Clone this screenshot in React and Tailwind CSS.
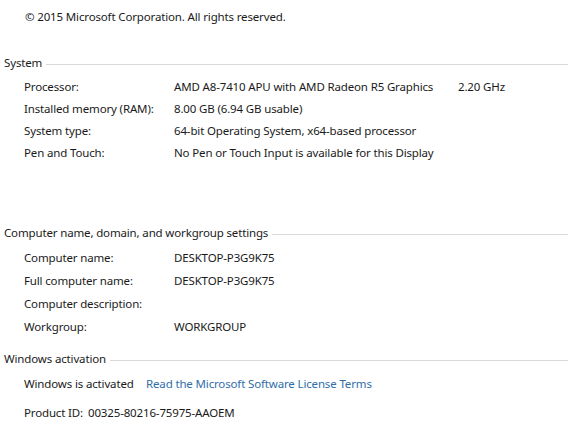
import React from "react";

const font = { fontFamily: '"Noto Sans", "Open Sans", sans-serif' };

function Header({ children, className = "" }) {
  return (
    <div className={`flex items-center h-[16px] leading-[16px] pl-[4px] ${className}`}>
      <span className="whitespace-nowrap">{children}</span>
      <div className="flex-1 h-px bg-[#d9d9d9] ml-[4px] mt-[2px]" />
    </div>
  );
}

function Row({ label, value, extra, h }) {
  return (
    <div className={`flex pl-[24px] ${h}`}>
      <div className="w-[150px] shrink-0 whitespace-nowrap">{label}</div>
      <div className="w-[284px] shrink-0 whitespace-nowrap">{value}</div>
      {extra && <div className="whitespace-nowrap">{extra}</div>}
    </div>
  );
}

export default function App() {
  return (
    <div className="w-[568px] h-[438px] bg-white text-[#1a1a1a] text-[11.5px] tracking-[-0.15px] overflow-hidden" style={font}>
      <div className="pt-[9px] pl-[25px] h-[25px] leading-[16px]">© 2015 Microsoft Corporation. All rights reserved.</div>

      <Header className="mt-[30px]">System</Header>
      <div className="mt-[5px]">
        <Row h="h-[22px] leading-[22px]" label="Processor:" value="AMD A8-7410 APU with AMD Radeon R5 Graphics" extra="2.20 GHz" />
        <Row h="h-[22px] leading-[22px]" label="Installed memory (RAM):" value="8.00 GB (6.94 GB usable)" />
        <Row h="h-[22px] leading-[22px]" label="System type:" value="64-bit Operating System, x64-based processor" />
        <Row h="h-[22px] leading-[22px]" label="Pen and Touch:" value="No Pen or Touch Input is available for this Display" />
      </div>

      <Header className="mt-[61px]">Computer name, domain, and workgroup settings</Header>
      <div className="mt-[5px]">
        <Row h="h-[23px] leading-[23px]" label="Computer name:" value="DESKTOP-P3G9K75" />
        <Row h="h-[23px] leading-[23px]" label="Full computer name:" value="DESKTOP-P3G9K75" />
        <Row h="h-[23px] leading-[23px]" label="Computer description:" value="" />
        <Row h="h-[23px] leading-[23px]" label="Workgroup:" value="WORKGROUP" />
      </div>

      <Header className="mt-[13px]">Windows activation</Header>
      <div className="mt-[9px] h-[16px] leading-[16px] pl-[24px] flex">
        <span className="w-[122px] shrink-0 whitespace-nowrap">Windows is activated</span>
        <span className="text-[#2f6ea8] whitespace-nowrap">Read the Microsoft Software License Terms</span>
      </div>
      <div className="mt-[13px] h-[16px] leading-[16px] pl-[24px] flex">
        <span className="w-[64px] shrink-0 whitespace-nowrap">Product ID:</span>
        <span className="whitespace-nowrap">00325-80216-75975-AAOEM</span>
      </div>
    </div>
  );
}
